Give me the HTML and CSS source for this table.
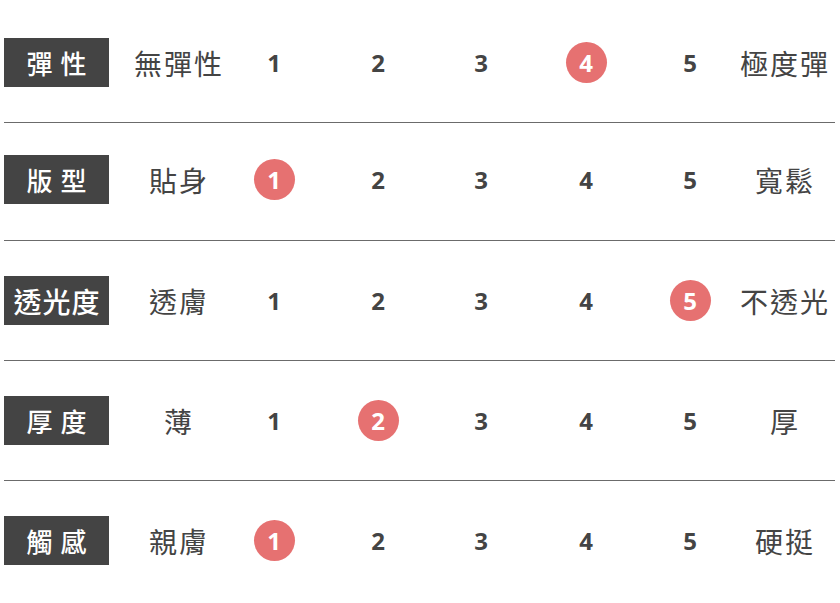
FILE: index.html
```html
<!DOCTYPE html>
<html lang="zh-Hant">
<head>
<meta charset="utf-8">
<title>Fabric chart</title>
<link rel="stylesheet" href="styles.css">
</head>
<body>
<div class="table">
  <div class="row">
    <div class="cell label"><span class="tag tag-2">彈性</span></div>
    <div class="cell val">無彈性</div>
    <div class="cell num">1</div>
    <div class="cell num">2</div>
    <div class="cell num">3</div>
    <div class="cell num"><span class="dot">4</span></div>
    <div class="cell num">5</div>
    <div class="cell val">極度彈</div>
  </div>
  <div class="row row-short">
    <div class="cell label"><span class="tag tag-2">版型</span></div>
    <div class="cell val">貼身</div>
    <div class="cell num"><span class="dot">1</span></div>
    <div class="cell num">2</div>
    <div class="cell num">3</div>
    <div class="cell num">4</div>
    <div class="cell num">5</div>
    <div class="cell val">寬鬆</div>
  </div>
  <div class="row">
    <div class="cell label"><span class="tag tag-3">透光度</span></div>
    <div class="cell val">透膚</div>
    <div class="cell num">1</div>
    <div class="cell num">2</div>
    <div class="cell num">3</div>
    <div class="cell num">4</div>
    <div class="cell num"><span class="dot">5</span></div>
    <div class="cell val">不透光</div>
  </div>
  <div class="row">
    <div class="cell label"><span class="tag tag-2">厚度</span></div>
    <div class="cell val">薄</div>
    <div class="cell num">1</div>
    <div class="cell num"><span class="dot">2</span></div>
    <div class="cell num">3</div>
    <div class="cell num">4</div>
    <div class="cell num">5</div>
    <div class="cell val">厚</div>
  </div>
  <div class="row last">
    <div class="cell label"><span class="tag tag-2">觸感</span></div>
    <div class="cell val">親膚</div>
    <div class="cell num"><span class="dot">1</span></div>
    <div class="cell num">2</div>
    <div class="cell num">3</div>
    <div class="cell num">4</div>
    <div class="cell num">5</div>
    <div class="cell val">硬挺</div>
  </div>
</div>
</body>
</html>
```

FILE: styles.css
```css
html, body {
  margin: 0;
  padding: 0;
  background: #ffffff;
}

body {
  font-family: "Noto Sans CJK TC", "Noto Sans", sans-serif;
  color: #444444;
}

.table {
  padding: 3px 0 0 4px;
}

.row {
  width: 831px;
  height: 119px;
  display: grid;
  grid-template-columns: 126px 96px 96px 112px 94px 116px 92px 96px;
  align-items: center;
  border-bottom: 1px solid #6b6b6b;
}

.row.row-short {
  height: 113px;
  padding-bottom: 4px;
}

.row.last {
  border-bottom: none;
}

.cell {
  display: flex;
  align-items: center;
  justify-content: center;
}

.label {
  justify-content: flex-start;
}

.tag {
  width: 105px;
  height: 49px;
  display: flex;
  align-items: center;
  justify-content: center;
  background: #444444;
  color: #ffffff;
  font-weight: 500;
  box-sizing: border-box;
}

.tag-2 {
  font-size: 26px;
  letter-spacing: 8px;
  padding-left: 8px;
}

.tag-3 {
  font-size: 28px;
  letter-spacing: 1px;
  padding-left: 1px;
}

.val {
  font-size: 28px;
  letter-spacing: 2px;
  padding-left: 2px;
  color: #444444;
}

.num {
  font-family: "Open Sans", "Liberation Sans", sans-serif;
  font-weight: 700;
  font-size: 24px;
  color: #444444;
}

.dot {
  width: 41px;
  height: 41px;
  border-radius: 50%;
  background: #e67171;
  color: #ffffff;
  display: flex;
  align-items: center;
  justify-content: center;
}
```
